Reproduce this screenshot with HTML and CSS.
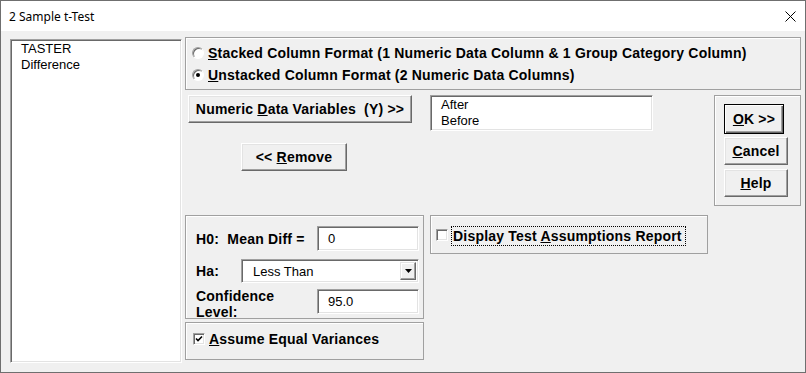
FILE: index.html
```html
<!DOCTYPE html>
<html lang="en">
<head>
    <meta charset="UTF-8">
    <title>2 Sample t-Test</title>
    <link rel="stylesheet" href="styles.css">
</head>
<body>
    <div class="window">
        <div class="titlebar">
            <span class="title">2 Sample t-Test</span>
            <svg class="close" width="11" height="11" viewBox="0 0 11 11">
                <path d="M0.5 0.5 L10.5 10.5 M10.5 0.5 L0.5 10.5" stroke="#000" stroke-width="1" fill="none"/>
            </svg>
        </div>

        <div class="client">
            <div class="listbox var-list">
                <div class="item">TASTER</div>
                <div class="item">Difference</div>
            </div>

            <div class="main">
                <div class="group format">
                    <div class="opt">
                        <span class="radio"></span>
                        <span class="lbl"><u>S</u>tacked Column Format (1 Numeric Data Column &amp; 1 Group Category Column)</span>
                    </div>
                    <div class="opt">
                        <span class="radio checked"></span>
                        <span class="lbl"><u>U</u>nstacked Column Format (2 Numeric Data Columns)</span>
                    </div>
                </div>

                <div class="middle">
                    <div class="vars-area">
                        <div class="var-row">
                            <div class="btn btn-numeric"><span>Numeric <u>D</u>ata Variables&nbsp; (Y) &gt;&gt;</span></div>
                            <div class="listbox y-list">
                                <div class="item">After</div>
                                <div class="item">Before</div>
                            </div>
                        </div>
                        <div class="btn btn-remove"><span>&lt;&lt; <u>R</u>emove</span></div>
                    </div>

                    <div class="group actions">
                        <div class="btn btn-ok"><span><u>O</u>K &gt;&gt;</span></div>
                        <div class="btn btn-cancel"><span><u>C</u>ancel</span></div>
                        <div class="btn btn-help"><span><u>H</u>elp</span></div>
                    </div>
                </div>

                <div class="bottom">
                    <div class="hyp-col">
                        <div class="group hyp">
                            <div class="row row-h0">
                                <span class="lbl lbl-h0">H0:&nbsp; Mean Diff =</span>
                                <div class="field">0</div>
                            </div>
                            <div class="row row-ha">
                                <span class="lbl lbl-ha">Ha:</span>
                                <div class="combo">
                                    <span class="combo-text">Less Than</span>
                                    <span class="combo-btn">
                                        <svg width="7" height="4" viewBox="0 0 7 4"><path d="M0 0 H7 L3.5 4 Z" fill="#000"/></svg>
                                    </span>
                                </div>
                            </div>
                            <div class="row row-conf">
                                <span class="lbl lbl-conf">Confidence<br>Level:</span>
                                <div class="field">95.0</div>
                            </div>
                        </div>
                        <div class="group eqvar">
                            <span class="check checked">
                                <svg width="8" height="8" viewBox="0 0 8 8"><path d="M1 3.5 L3 5.5 L7 1.5" stroke="#000" stroke-width="1.6" fill="none"/></svg>
                            </span>
                            <span class="lbl"><u>A</u>ssume Equal Variances</span>
                        </div>
                    </div>

                    <div class="group report">
                        <span class="check"></span>
                        <span class="lbl focus">Display Test <u>A</u>ssumptions Report</span>
                    </div>
                </div>
            </div>
        </div>
    </div>
</body>
</html>
```

FILE: styles.css
```css
* {
    box-sizing: border-box;
    margin: 0;
    padding: 0;
}

body {
    width: 806px;
    height: 373px;
    font-family: "Liberation Sans", Arial, sans-serif;
    color: #000;
    background: #f0f0f0;
}

.window {
    width: 806px;
    height: 373px;
    border: 1px solid #6f6f6f;
    display: flex;
    flex-direction: column;
    background: #f0f0f0;
}

.titlebar {
    height: 30px;
    flex: none;
    background: #fff;
    display: flex;
    align-items: center;
    justify-content: space-between;
    padding: 0 9px 0 8px;
}

.title {
    font-family: "Noto Sans", "Open Sans", sans-serif;
    font-size: 12px;
    color: #000;
}

.close {
    display: block;
}

.client {
    flex: 1;
    display: flex;
    padding: 6px 4px 0 9px;
}

/* sunken boxes */
.listbox,
.field,
.combo {
    background: #fff;
    border: 1px solid;
    border-color: #a0a0a0 #fff #fff #a0a0a0;
    box-shadow: inset 1px 1px 0 #696969, inset -1px -1px 0 #e3e3e3;
}

.listbox {
    font-size: 13px;
    line-height: 16px;
    padding-top: 1px;
}

.var-list {
    width: 172px;
    height: 324px;
    margin-top: 2px;
    padding-left: 10px;
}

.main {
    margin-left: 3px;
    width: 616px;
    display: flex;
    flex-direction: column;
}

.group {
    border: 1px solid #a0a0a0;
    box-shadow: inset 1px 1px 0 #fff;
}

.lbl {
    font-size: 14px;
    font-weight: bold;
    letter-spacing: 0.2px;
    white-space: nowrap;
}

.format {
    height: 53px;
    padding: 4px 0 0 6px;
}

.opt {
    height: 22px;
    display: flex;
    align-items: center;
    gap: 4px;
}

.radio {
    width: 12px;
    height: 12px;
    border-radius: 50%;
    background: #fff;
    border: 1px solid;
    border-color: #a0a0a0 #fff #fff #a0a0a0;
    box-shadow: inset 1px 1px 0 #696969;
    display: flex;
    align-items: center;
    justify-content: center;
}

.radio.checked::after {
    content: '';
    width: 4px;
    height: 4px;
    border-radius: 50%;
    background: #000;
}

.middle {
    margin-top: 5px;
    height: 111px;
    display: flex;
    justify-content: space-between;
}

.vars-area {
    width: 528px;
}

.var-row {
    display: flex;
    align-items: flex-start;
    padding-left: 3px;
}

/* raised buttons */
.btn {
    height: 28px;
    background: #f0f0f0;
    border: 1px solid;
    border-color: #fff #696969 #696969 #fff;
    box-shadow: inset -1px -1px 0 #a0a0a0, inset 1px 1px 0 #e3e3e3;
    display: flex;
    align-items: center;
    justify-content: center;
    font-size: 14px;
    font-weight: bold;
    letter-spacing: 0.2px;
    white-space: nowrap;
}

.btn-numeric {
    width: 224px;
}

.y-list {
    margin-left: 18px;
    width: 223px;
    height: 36px;
    padding-left: 10px;
}

.btn-remove {
    width: 106px;
    margin: 12px 0 0 56px;
}

.actions {
    width: 87px;
    padding: 8px 0 0 9px;
}

.btn-ok {
    width: 60px;
    height: 30px;
    border-color: #000;
    box-shadow: inset 1px 1px 0 #fff, inset -1px -1px 0 #696969, inset -2px -2px 0 #a0a0a0;
}

.btn-cancel {
    width: 64px;
    margin-top: 3px;
}

.btn-help {
    width: 64px;
    margin-top: 4px;
}

.bottom {
    margin-top: 9px;
    display: flex;
    align-items: flex-start;
}

.hyp-col {
    width: 239px;
}

.hyp {
    height: 104px;
    padding: 10px 4px 0 10px;
}

.row {
    display: flex;
    align-items: center;
}

.lbl-h0 {
    width: 121px;
}

.lbl-ha {
    width: 45px;
}

.row-ha {
    margin-top: 8px;
}

.row-conf {
    margin-top: 6px;
    align-items: flex-start;
}

.lbl-conf {
    width: 121px;
    line-height: 16px;
    margin-top: -1px;
}

.field {
    width: 102px;
    height: 25px;
    font-size: 13px;
    line-height: 23px;
    padding-left: 10px;
}

.combo {
    width: 178px;
    height: 24px;
    display: flex;
    align-items: stretch;
    font-size: 13px;
    padding: 2px 2px 2px 0;
}

.combo-text {
    flex: 1;
    padding-left: 11px;
    line-height: 19px;
}

.combo-btn {
    width: 16px;
    background: #f0f0f0;
    border: 1px solid;
    border-color: #e3e3e3 #696969 #696969 #e3e3e3;
    box-shadow: inset -1px -1px 0 #a0a0a0, inset 1px 1px 0 #fff;
    display: flex;
    align-items: center;
    justify-content: center;
}

.combo-btn svg {
    display: block;
}

.eqvar {
    margin-top: 3px;
    height: 38px;
    padding: 10px 0 0 7px;
    display: flex;
    align-items: flex-start;
    gap: 4px;
}

.eqvar .lbl {
    line-height: 13px;
}

.check {
    width: 12px;
    height: 12px;
    flex: none;
    background: #fff;
    border: 1px solid;
    border-color: #a0a0a0 #fff #fff #a0a0a0;
    box-shadow: inset 1px 1px 0 #696969, inset -1px -1px 0 #e3e3e3;
    display: flex;
    align-items: center;
    justify-content: center;
}

.check svg {
    display: block;
}

.report {
    margin-left: 6px;
    width: 278px;
    height: 39px;
    padding: 10px 0 0 5px;
    display: flex;
    align-items: center;
    align-self: flex-start;
    gap: 3px;
}

.report .check {
    align-self: flex-start;
    margin-top: 3px;
}

.focus {
    border: 1px dotted #000;
    height: 20px;
    line-height: 18px;
    padding: 0 3px 0 1px;
    align-self: flex-start;
}
```
